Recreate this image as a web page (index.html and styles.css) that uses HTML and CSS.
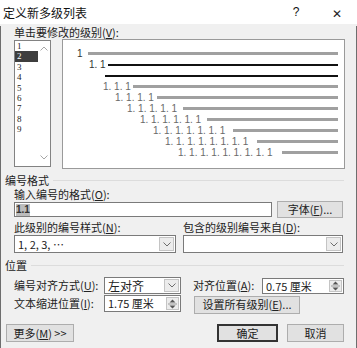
FILE: index.html
```html
<!DOCTYPE html>
<html>
<head>
    <meta name="viewport" content="width=device-width, initial-scale=1">
    <title>定义新多级列表</title>
    <link rel="stylesheet" href="styles.css">
</head>
<body>
    <div class="dialog">
        <div class="titlebar">
            <span class="title">定义新多级列表</span>
            <span class="help">?</span>
            <span class="close">&#x2715;</span>
        </div>

        <div class="content">
            <div class="label first">单击要修改的级别(<u>V</u>):</div>

            <div class="levels">
                <div class="listbox">
                    <div class="items">
                        <div class="item">1</div>
                        <div class="item selected">2</div>
                        <div class="item">3</div>
                        <div class="item">4</div>
                        <div class="item">5</div>
                        <div class="item">6</div>
                        <div class="item">7</div>
                        <div class="item">8</div>
                        <div class="item">9</div>
                    </div>
                    <div class="scroll">
                        <svg width="8" height="5" viewBox="0 0 8 5"><path d="M0.5 4.5 L4 1 L7.5 4.5" fill="none" stroke="#a6a6a6" stroke-width="1"/></svg>
                        <svg width="8" height="5" viewBox="0 0 8 5"><path d="M0.5 0.5 L4 4 L7.5 0.5" fill="none" stroke="#a6a6a6" stroke-width="1"/></svg>
                    </div>
                </div>

                <div class="preview">
                    <div class="prow r1"><span class="num dark">1</span><span class="bar"></span></div>
                    <div class="prow r2"><span class="num dark">1. 1</span><span class="bar black"></span></div>
                    <div class="prow r3"><span class="bar black"></span></div>
                    <div class="prow r4"><span class="num">1. 1. 1</span><span class="bar"></span></div>
                    <div class="prow r5"><span class="num">1. 1. 1. 1</span><span class="bar"></span></div>
                    <div class="prow r6"><span class="num">1. 1. 1. 1. 1</span><span class="bar"></span></div>
                    <div class="prow r7"><span class="num">1. 1. 1. 1. 1. 1</span><span class="bar"></span></div>
                    <div class="prow r8"><span class="num">1. 1. 1. 1. 1. 1. 1</span><span class="bar"></span></div>
                    <div class="prow r9"><span class="num">1. 1. 1. 1. 1. 1. 1. 1</span><span class="bar"></span></div>
                    <div class="prow r10"><span class="num">1. 1. 1. 1. 1. 1. 1. 1. 1</span><span class="bar"></span></div>
                </div>
            </div>

            <div class="group g1"><span>编号格式</span><span class="rule"></span></div>

            <div class="label sub">输入编号的格式(<u>O</u>):</div>
            <div class="row formatrow">
                <div class="field wide"><span class="sel">1.1</span></div>
                <button class="btn fontbtn">字体(<u>F</u>)...</button>
            </div>

            <div class="row labelrow">
                <div class="label col">此级别的编号样式(<u>N</u>):</div>
                <div class="label col right">包含的级别编号来自(<u>D</u>):</div>
            </div>
            <div class="row selectrow">
                <div class="combo col">
                    <span class="value">1, 2, 3, …</span>
                    <span class="arrow"><svg width="8" height="5" viewBox="0 0 8 5"><path d="M0.5 0.5 L4 4 L7.5 0.5" fill="none" stroke="#6d6d6d" stroke-width="1"/></svg></span>
                </div>
                <div class="combo col right">
                    <span class="value"></span>
                    <span class="arrow"><svg width="8" height="5" viewBox="0 0 8 5"><path d="M0.5 0.5 L4 4 L7.5 0.5" fill="none" stroke="#6d6d6d" stroke-width="1"/></svg></span>
                </div>
            </div>

            <div class="group g2"><span>位置</span><span class="rule"></span></div>

            <div class="row posrow first">
                <div class="label plabel">编号对齐方式(<u>U</u>):</div>
                <div class="combo small">
                    <span class="value big">左对齐</span>
                    <span class="arrow"><svg width="8" height="5" viewBox="0 0 8 5"><path d="M0.5 0.5 L4 4 L7.5 0.5" fill="none" stroke="#6d6d6d" stroke-width="1"/></svg></span>
                </div>
                <div class="label alabel">对齐位置(<u>A</u>):</div>
                <div class="spin aspin">
                    <span class="value">0.75 厘米</span>
                    <span class="spinbtn"><svg width="9" height="12" viewBox="0 0 9 12"><path d="M1.5 4.5 L4.5 1.5 L7.5 4.5 Z M1.5 7.5 L4.5 10.5 L7.5 7.5 Z" fill="#555"/><path d="M0 6 H9" stroke="#999" stroke-width="1"/></svg></span>
                </div>
            </div>

            <div class="row posrow second">
                <div class="label plabel">文本缩进位置(<u>I</u>):</div>
                <div class="spin small">
                    <span class="value">1.75 厘米</span>
                    <span class="spinbtn"><svg width="9" height="12" viewBox="0 0 9 12"><path d="M1.5 4.5 L4.5 1.5 L7.5 4.5 Z M1.5 7.5 L4.5 10.5 L7.5 7.5 Z" fill="#555"/><path d="M0 6 H9" stroke="#999" stroke-width="1"/></svg></span>
                </div>
                <button class="btn allbtn">设置所有级别(<u>E</u>)...</button>
            </div>

            <div class="row bottom">
                <button class="btn more">更多(<u>M</u>) &gt;&gt;</button>
                <span class="spacer"></span>
                <button class="btn ok">确定</button>
                <button class="btn cancel">取消</button>
            </div>
        </div>
    </div>
</body>
</html>
```

FILE: styles.css
```css
html, body {
    margin: 0;
    padding: 0;
}

body {
    font-family: "Noto Sans CJK SC", "Liberation Sans", sans-serif;
    font-size: 11px;
    color: #222;
    background: #f0f0f0;
}

.dialog {
    width: 357px;
    height: 348px;
    box-sizing: border-box;
    background: #f0f0f0;
    overflow: hidden;
}

.titlebar {
    height: 24px;
    background: #fff;
    display: flex;
    align-items: center;
    font-size: 12px;
    color: #111;
}

.title {
    margin-left: 3px;
    flex: 1;
}

.help {
    width: 14px;
    margin-right: 27px;
    font-family: "Liberation Sans", sans-serif;
    font-size: 12px;
    text-align: center;
}

.close {
    width: 14px;
    margin-right: 13px;
    font-size: 12px;
    text-align: center;
    color: #222;
}

.content {
    height: 324px;
    box-sizing: border-box;
    border: 1px solid #6e6e6e;
    border-top: none;
    padding: 0 12px 0 13px;
}

.label {
    height: 13px;
    line-height: 13px;
    white-space: nowrap;
}

.label.first {
    margin-top: 2px;
}

u {
    text-decoration: underline;
}

/* level list + preview */
.levels {
    display: flex;
    align-items: flex-start;
    height: 130px;
}

.listbox {
    margin-top: 1px;
    width: 37px;
    height: 127px;
    box-sizing: border-box;
    border: 1px solid #828282;
    background: #fff;
    display: flex;
}

.items {
    width: 23px;
    font-family: "Liberation Serif", serif;
    font-size: 9px;
}

.item {
    height: 10.4px;
    line-height: 10.4px;
    padding-left: 2px;
    color: #222;
}

.item.selected {
    background: #3e3e3e;
    color: #fff;
}

.scroll {
    flex: 1;
    display: flex;
    flex-direction: column;
    justify-content: space-between;
    align-items: center;
    padding: 5px 0 6px;
}

.preview {
    flex: 1;
    margin-left: 11px;
    margin-right: -1px;
    height: 130px;
    box-sizing: border-box;
    border: 1px solid #9a9a9a;
    background: #fff;
    padding: 8px 6px 0 0;
}

.prow {
    height: 11px;
    display: flex;
    align-items: center;
}

.num {
    font-family: "Liberation Sans", sans-serif;
    font-size: 10px;
    color: #6a6a6a;
    white-space: nowrap;
    line-height: 11px;
}

.num.dark {
    color: #333;
}

.bar {
    flex: 1;
    height: 3px;
    background: #a0a0a0;
}

.bar.black {
    height: 2px;
    background: #111;
}

.r1 { padding-left: 14px; }
.r1 .num { width: 11px; }
.r2 { padding-left: 26px; }
.r2 .num { width: 19px; }
.r3 { padding-left: 42px; }
.r4 { padding-left: 40px; }
.r4 .num { width: 30px; }
.r5 { padding-left: 52px; }
.r5 .num { width: 42px; }
.r6 { padding-left: 64px; }
.r6 .num { width: 56px; }
.r7 { padding-left: 77px; }
.r7 .num { width: 67px; }
.r8 { padding-left: 90px; }
.r8 .num { width: 80px; }
.r9 { padding-left: 102px; }
.r9 .num { width: 92px; }
.r10 { padding-left: 115px; }
.r10 .num { width: 104px; }

/* group headings */
.group {
    display: flex;
    align-items: center;
    height: 14px;
    margin-left: -9px;
    white-space: nowrap;
}

.group .rule {
    flex: 1;
    height: 1px;
    margin-left: 4px;
    background: #dcdcdc;
}

.g1 {
    margin-top: 4px;
}

.g2 {
    margin-top: 5px;
}

.label.sub {
    margin-top: 1px;
}

.row {
    display: flex;
    align-items: center;
}

.formatrow {
    height: 17px;
}

.field {
    height: 15px;
    box-sizing: border-box;
    border: 1px solid #7a7a7a;
    background: #fff;
    display: flex;
    align-items: center;
    padding-left: 1px;
}

.field.wide {
    width: 258px;
}

.sel {
    background: #bcbcbc;
    font-family: "Liberation Sans", sans-serif;
    font-size: 10px;
    font-weight: bold;
    line-height: 12px;
    color: #333;
}

.btn {
    font-family: "Noto Sans CJK SC", "Liberation Sans", sans-serif;
    font-size: 11px;
    color: #222;
    background: #e1e1e1;
    border: 1px solid #adadad;
    padding: 0;
    height: 17px;
    line-height: 15px;
    box-sizing: border-box;
    white-space: nowrap;
}

.fontbtn {
    margin-left: 5px;
    width: 66px;
}

.labelrow {
    margin-top: 3px;
}

.col {
    width: 162px;
}

.col.right {
    width: 160px;
    margin-left: 7px;
}

.selectrow {
    margin-top: 1px;
    height: 18px;
}

.combo, .spin {
    height: 18px;
    box-sizing: border-box;
    border: 1px solid #7a7a7a;
    background: #fff;
    display: flex;
    align-items: stretch;
}

.combo .value, .spin .value {
    flex: 1;
    padding-left: 3px;
    line-height: 16px;
    white-space: nowrap;
    overflow: hidden;
}

.combo .arrow {
    width: 13px;
    margin: 1px;
    border: 1px solid #c4c4c4;
    background: #ececec;
    display: flex;
    align-items: center;
    justify-content: center;
}

.value.big {
    font-size: 12px;
}

.posrow {
    height: 17px;
}

.posrow.first {
    margin-top: 5px;
}

.posrow.second {
    margin-top: 1px;
}

.plabel {
    width: 90px;
}

.combo.small, .spin.small {
    width: 77px;
    height: 17px;
}

.spin {
    height: 16px;
}

.spin .value {
    line-height: 14px;
}

.spinbtn {
    width: 11px;
    margin: 1px;
    border: 1px solid #c4c4c4;
    background: #ececec;
    display: flex;
    align-items: center;
    justify-content: center;
}

.alabel {
    width: 69px;
    margin-left: 12px;
}

.aspin {
    width: 82px;
}

.allbtn {
    margin-left: 13px;
    width: 106px;
    height: 18px;
    margin-top: 2px;
}

.bottom {
    margin-top: 12px;
    height: 18px;
}

.bottom .btn {
    height: 18px;
}

.more {
    margin-left: -8px;
    width: 68px;
}

.spacer {
    flex: 1;
}

.ok {
    width: 61px;
    border: 2px solid #333;
    line-height: 14px;
}

.cancel {
    width: 57px;
    margin-left: 9px;
}
```
